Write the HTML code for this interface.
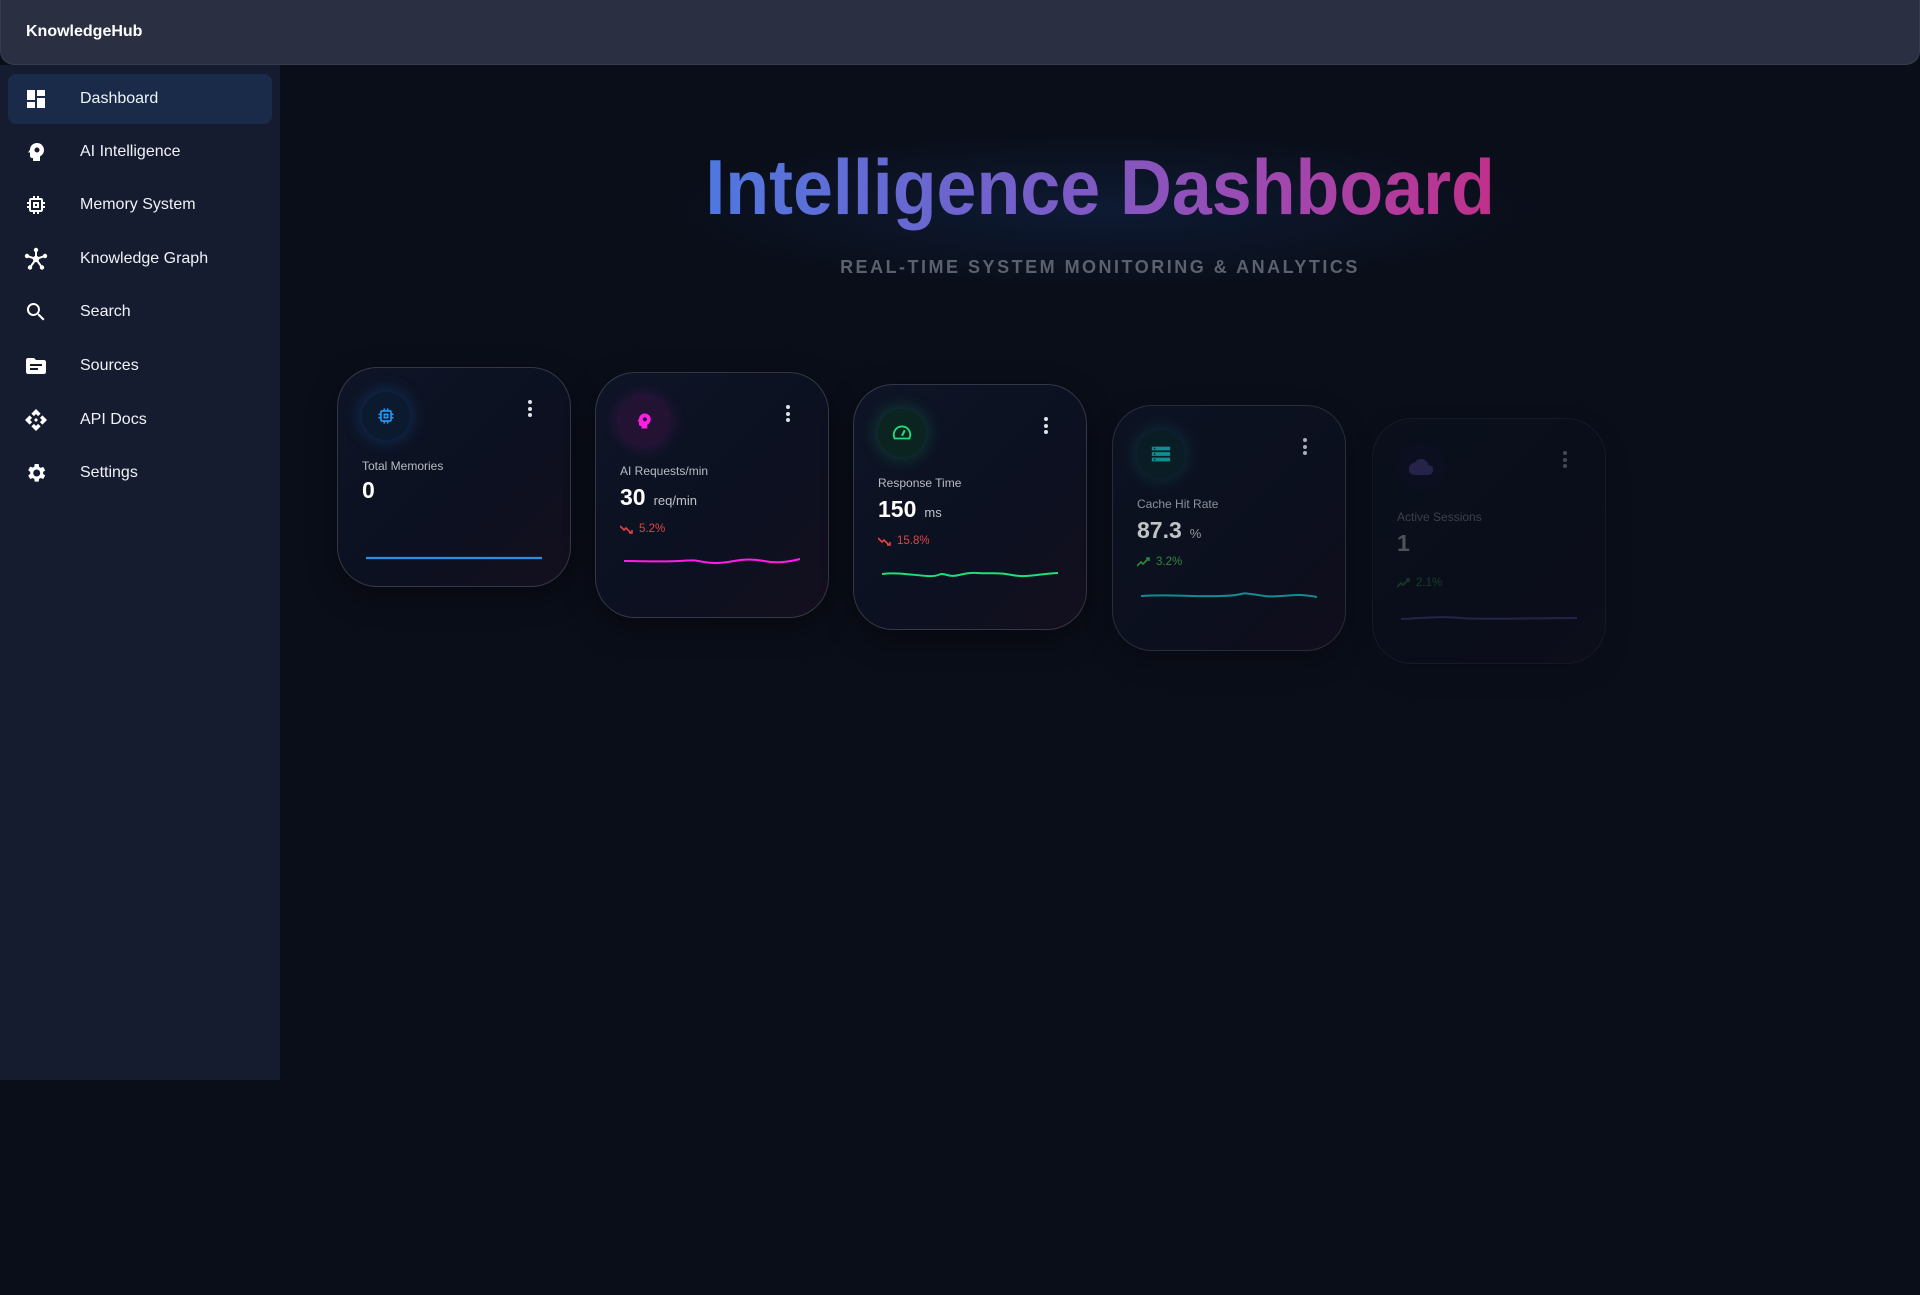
<!DOCTYPE html>
<html><head><meta charset="utf-8"><style>
*{box-sizing:border-box;margin:0;padding:0}
body{width:1920px;height:1295px;background:#0a0e19;font-family:"Liberation Sans",sans-serif;position:relative;overflow:hidden;color:#fff}
.top{position:absolute;left:0;top:0;width:1920px;height:65px;background:#2a3041;border-radius:0 0 14px 14px;border:1px solid #353c4e;border-top:none}
.brand{position:absolute;left:25px;top:23px;font-weight:bold;font-size:16px;color:#fff}
.side{position:absolute;left:0;top:65px;width:280px;height:1015px;background:#161c2f}
.item{position:absolute;left:8px;width:264px;height:50px;border-radius:8px}
.item.act{background:#1a2b4a}
.item svg{position:absolute;left:16px;top:13px}
.item span{position:absolute;left:72px;top:16px;font-size:16px;color:#f0f2f6}
.tw{position:absolute;left:0;width:2200px;top:140px;text-align:center}
.title{display:inline-block;font-weight:bold;font-size:78px;line-height:94px;transform:scaleX(.92);
background:linear-gradient(90deg,#4f78e0 0%,#7a5cc6 45%,#a048b0 72%,#c0308a 100%);-webkit-background-clip:text;background-clip:text;color:transparent}
.glow{position:absolute;left:660px;top:130px;width:880px;height:160px;border-radius:50%;background:radial-gradient(ellipse,rgba(20,50,100,.35),rgba(10,14,25,0) 70%)}
.sub{position:absolute;left:0;width:2200px;top:257px;text-align:center;font-weight:bold;font-size:18px;letter-spacing:2.5px;color:#5b616e}
.card{position:absolute;width:234px;height:246px;border-radius:40px;border:1px solid rgba(255,255,255,.16);background:linear-gradient(135deg,#0e1526 0%,#0c1020 60%,#140f1e 100%);box-shadow:0 10px 30px rgba(0,0,0,.4)}
.ic{position:absolute;left:24px;top:24px;width:48px;height:48px;border-radius:50%;display:flex;align-items:center;justify-content:center}
.dots{position:absolute;left:190px;top:32px;width:4px}
.dots i{display:block;width:4px;height:4px;border-radius:2px;background:#dfe2e8;margin-bottom:2.5px}
.lbl{position:absolute;left:24px;top:91px;font-size:12px;color:#b9bcc4}
.val{position:absolute;left:24px;top:111px;font-size:23px;font-weight:bold;color:#fff}
.val small{font-size:13px;font-weight:normal;color:#c0c3ca;margin-left:8px}
.tr{position:absolute;left:24px;top:150px;font-size:11.5px;display:flex;align-items:center;gap:5px}
.sp{position:absolute;left:28px;top:180px}
</style></head><body>
<div class="top"><div class="brand">KnowledgeHub</div></div>
<div class="side">
 <div class="item act" style="top:9px"><svg width="24" height="24" viewBox="0 0 24 24" fill="#fff"><path d="M3 13h8V3H3zm0 8h8v-6H3zm10 0h8V11h-8zm0-18v6h8V3z"/></svg><span>Dashboard</span></div>
 <div class="item" style="top:62px"><svg width="24" height="24" viewBox="0 0 24 24" fill="#fff"><path d="M13 3C9.2 3 6.1 5.9 6 9.6L4 12.5h2V16c0 1.1.9 2 2 2h1v3h7v-4.7c2.4-1.1 4-3.5 4-6.3 0-3.9-3.1-7-7-7zm0 4.5a2.5 2.5 0 110 5 2.5 2.5 0 010-5z"/></svg><span>AI Intelligence</span></div>
 <div class="item" style="top:115px"><svg width="24" height="24" viewBox="0 0 24 24" fill="#fff"><path d="M15 9H9v6h6V9zm-2 4h-2v-2h2v2zm8-2V9h-2V7c0-1.1-.9-2-2-2h-2V3h-2v2h-2V3H9v2H7c-1.1 0-2 .9-2 2v2H3v2h2v2H3v2h2v2c0 1.1.9 2 2 2h2v2h2v-2h2v2h2v-2h2c1.1 0 2-.9 2-2v-2h2v-2h-2v-2h2zm-4 6H7V7h10v10z"/></svg><span>Memory System</span></div>
 <div class="item" style="top:169px"><svg width="24" height="24" viewBox="0 0 24 24" fill="#fff"><circle cx="12" cy="12" r="3.2"/><circle cx="12" cy="3" r="2.2"/><circle cx="3" cy="9" r="2.2"/><circle cx="21" cy="9" r="2.2"/><circle cx="6" cy="20.5" r="2.2"/><circle cx="18" cy="20.5" r="2.2"/><path d="M12 3v9M3 9l9 3 9-3M6 20.5l6-8.5 6 8.5" stroke="#fff" stroke-width="2" fill="none"/></svg><span>Knowledge Graph</span></div>
 <div class="item" style="top:222px"><svg width="24" height="24" viewBox="0 0 24 24" fill="#fff"><path d="M15.5 14h-.8l-.3-.3A6.5 6.5 0 109.5 16a6.5 6.5 0 004.2-1.6l.3.3v.8l5 5 1.5-1.5-5-5zm-6 0C7 14 5 12 5 9.5S7 5 9.5 5 14 7 14 9.5 12 14 9.5 14z"/></svg><span>Search</span></div>
 <div class="item" style="top:276px"><svg width="24" height="24" viewBox="0 0 24 24" fill="#fff"><path d="M20 6h-8l-2-2H4c-1.1 0-2 .9-2 2v12c0 1.1.9 2 2 2h16c1.1 0 2-.9 2-2V8c0-1.1-.9-2-2-2zm-6 10H6v-2h8v2zm4-4H6v-2h12v2z"/></svg><span>Sources</span></div>
 <div class="item" style="top:330px"><svg width="24" height="24" viewBox="0 0 24 24" fill="#fff"><path d="M14 12l-2 2-2-2 2-2 2 2zm-2-6l2.1 2.1 2.5-2.5L12 1 7.4 5.6l2.5 2.5L12 6zm-6 6l2.1-2.1-2.5-2.5L1 12l4.6 4.6 2.5-2.5L6 12zm12 0l-2.1 2.1 2.5 2.5L23 12l-4.6-4.6-2.5 2.5L18 12zm-6 6l-2.1-2.1-2.5 2.5L12 23l4.6-4.6-2.5-2.5L12 18z"/></svg><span>API Docs</span></div>
 <div class="item" style="top:383px"><svg width="24" height="24" viewBox="0 0 24 24" fill="#fff"><path d="M19.1 12.9a7 7 0 000-1.9l2.1-1.6-2-3.5-2.5 1a7.3 7.3 0 00-1.6-.9L14.7 3h-4l-.4 2.7c-.6.2-1.1.5-1.6.9l-2.5-1-2 3.5L6.3 11a7 7 0 000 1.9l-2.1 1.6 2 3.5 2.5-1c.5.4 1 .7 1.6.9l.4 2.7h4l.4-2.7c.6-.2 1.1-.5 1.6-.9l2.5 1 2-3.5-2.1-1.6zM12.7 15.5a3.5 3.5 0 110-7 3.5 3.5 0 010 7z"/></svg><span>Settings</span></div>
</div>

<div class="glow"></div>
<div class="tw"><span class="title">Intelligence Dashboard</span></div>
<div class="sub">REAL-TIME SYSTEM MONITORING &amp; ANALYTICS</div>

<div class="card" style="left:337px;top:367px;height:220px">
 <div class="ic" style="background:#0c1a30;box-shadow:0 0 18px rgba(30,120,220,.35)"><svg width="20" height="20" viewBox="0 0 24 24" fill="#2196f3"><path d="M15 9H9v6h6V9zm-2 4h-2v-2h2v2zm8-2V9h-2V7c0-1.1-.9-2-2-2h-2V3h-2v2h-2V3H9v2H7c-1.1 0-2 .9-2 2v2H3v2h2v2H3v2h2v2c0 1.1.9 2 2 2h2v2h2v-2h2v2h2v-2h2c1.1 0 2-.9 2-2v-2h2v-2h-2v-2h2zm-4 6H7V7h10v10z"/></svg></div>
 <div class="dots"><i></i><i></i><i></i></div>
 <div class="lbl">Total Memories</div>
 <div class="val" style="top:109px">0</div>
 <svg class="sp" style="top:180px" width="178" height="20"><path d="M0 10H176" stroke="#2a8ee0" stroke-width="2.2" fill="none"/></svg>
</div>
<div class="card" style="left:595px;top:372px">
 <div class="ic" style="background:#241232;box-shadow:0 0 18px rgba(200,30,200,.3)"><svg width="20" height="20" viewBox="0 0 24 24" fill="#ff1ee8"><path d="M13 3C9.2 3 6.1 5.9 6 9.6L4 12.5h2V16c0 1.1.9 2 2 2h1v3h7v-4.7c2.4-1.1 4-3.5 4-6.3 0-3.9-3.1-7-7-7zm0 4.5a2.5 2.5 0 110 5 2.5 2.5 0 010-5z"/></svg></div>
 <div class="dots"><i></i><i></i><i></i></div>
 <div class="lbl">AI Requests/min</div>
 <div class="val">30<small>req/min</small></div>
 <div class="tr" style="color:#e04444"><svg width="14" height="10" viewBox="0 0 14 10"><path d="M0 2l4 4 2-2 5 5M9 9h3V6" stroke="#e04444" stroke-width="1.6" fill="none"/></svg>5.2%</div>
 <svg class="sp" width="178" height="20"><path d="M0 8C20 8 40 9 55 8S70 7 80 9S100 10 110 8 130 6 140 8 160 10 176 6" stroke="#ff1ee8" stroke-width="2" fill="none"/></svg>
</div>
<div class="card" style="left:853px;top:384px">
 <div class="ic" style="background:#0b2420;box-shadow:0 0 18px rgba(30,200,120,.3)"><svg width="22" height="22" viewBox="0 0 24 24"><path d="M4 18a9 9 0 1116 0z" stroke="#1de07a" stroke-width="2" fill="none"/><path d="M12 15l3-6" stroke="#1de07a" stroke-width="2.2"/></svg></div>
 <div class="dots"><i></i><i></i><i></i></div>
 <div class="lbl">Response Time</div>
 <div class="val">150<small>ms</small></div>
 <div class="tr" style="color:#e04444"><svg width="14" height="10" viewBox="0 0 14 10"><path d="M0 2l4 4 2-2 5 5M9 9h3V6" stroke="#e04444" stroke-width="1.6" fill="none"/></svg>15.8%</div>
 <svg class="sp" width="178" height="20"><path d="M0 9C15 7 30 10 45 11S55 7 65 10 80 7 95 8 115 7 130 10 155 9 176 8" stroke="#1de07a" stroke-width="2" fill="none"/></svg>
</div>
<div class="card" style="left:1112px;top:405px;opacity:.75">
 <div class="ic" style="background:#0b2228;box-shadow:0 0 18px rgba(30,180,190,.3)"><svg width="22" height="22" viewBox="0 0 24 24" fill="#18b4bc"><path d="M2 4h20v4H2zM2 10h20v4H2zM2 16h20v4H2z"/><circle cx="5" cy="6" r="1" fill="#0b2228"/><circle cx="5" cy="12" r="1" fill="#0b2228"/><circle cx="5" cy="18" r="1" fill="#0b2228"/></svg></div>
 <div class="dots"><i></i><i></i><i></i></div>
 <div class="lbl">Cache Hit Rate</div>
 <div class="val">87.3<small>%</small></div>
 <div class="tr" style="color:#3ab04a"><svg width="14" height="10" viewBox="0 0 14 10"><path d="M0 9l4-4 2 2 5-5M9 1h3v3" stroke="#3ab04a" stroke-width="1.6" fill="none"/></svg>3.2%</div>
 <svg class="sp" width="178" height="20"><path d="M0 10C30 8 50 11 80 10S95 6 110 8 125 11 140 10 160 8 176 11" stroke="#18b4bc" stroke-width="2" fill="none"/></svg>
</div>
<div class="card" style="left:1372px;top:418px;opacity:.28">
 <div class="ic" style="background:#141530"><svg width="24" height="24" viewBox="0 0 24 24" fill="#6a5cc8"><path d="M19.4 10A7.5 7.5 0 005.4 8 6 6 0 006 20h13a5 5 0 00.4-10z"/></svg></div>
 <div class="dots"><i></i><i></i><i></i></div>
 <div class="lbl">Active Sessions</div>
 <div class="val">1</div>
 <div class="tr" style="color:#3ab04a;top:158px"><svg width="14" height="10" viewBox="0 0 14 10"><path d="M0 9l4-4 2 2 5-5M9 1h3v3" stroke="#3ab04a" stroke-width="1.6" fill="none"/></svg>2.1%</div>
 <svg class="sp" style="top:190px" width="178" height="20"><path d="M0 10C20 9 40 7 60 9S120 9 176 9" stroke="#6a5cc8" stroke-width="2" fill="none"/></svg>
</div>
</body></html>
